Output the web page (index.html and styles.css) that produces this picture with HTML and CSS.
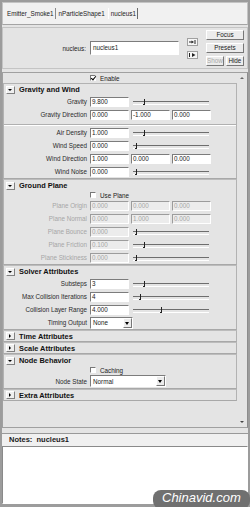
FILE: index.html
```html
<!DOCTYPE html>
<html lang="en">
<head>
  <meta charset="UTF-8">
  <meta name="viewport" content="width=device-width, initial-scale=1.0">
  <title>Attribute Editor - nucleus1</title>
  <link rel="stylesheet" href="styles.css">
</head>
<body>
  <div class="window">
    <div class="tabbar">
      <span class="tab">Emitter_Smoke1</span>
      <span class="tab">nParticleShape1</span>
      <span class="tab active">nucleus1</span>
    </div>

    <div class="node-panel">
      <span class="node-label">nucleus:</span>
      <span class="node-name">nucleus1</span>
      <div class="node-icons">
        <svg width="11" height="8" viewBox="0 0 11 8">
          <rect x="0.5" y="0.5" width="10" height="7" fill="#f6f6f6" stroke="#a0a0a0"/>
          <path d="M8 2 V6" stroke="#222" stroke-width="1"/>
          <path d="M2 4 H5" stroke="#222" stroke-width="1"/>
          <path d="M4.5 2.5 L7 4 L4.5 5.5 Z" fill="#222"/>
        </svg>
        <svg width="11" height="8" viewBox="0 0 11 8">
          <rect x="0.5" y="0.5" width="10" height="7" fill="#f6f6f6" stroke="#a0a0a0"/>
          <path d="M2.5 2 V6" stroke="#222" stroke-width="1"/>
          <path d="M5 2 L8.5 4 L5 6 Z" fill="#222"/>
        </svg>
      </div>
      <div class="node-buttons">
        <button class="btn">Focus</button>
        <button class="btn">Presets</button>
        <div class="btn-pair">
          <button class="btn small" disabled>Show</button>
          <button class="btn">Hide</button>
        </div>
      </div>
    </div>

    <div class="scroll-area">
      <div class="attrs">
        <div class="check-row enable"><span class="checkbox checked"></span>Enable</div>

        <div class="frame">
          <div class="frame-head"><span class="toggle open"></span>Gravity and Wind</div>
          <div class="row"><span class="lbl">Gravity</span><span class="field">9.800</span><span class="slider"><span class="thumb" style="left: 10px"></span></span></div>
          <div class="row"><span class="lbl">Gravity Direction</span><span class="field">0.000</span><span class="field">-1.000</span><span class="field">0.000</span></div>
          <div class="separator"></div>
          <div class="row"><span class="lbl">Air Density</span><span class="field">1.000</span><span class="slider"><span class="thumb" style="left: 10px"></span></span></div>
          <div class="row"><span class="lbl">Wind Speed</span><span class="field">0.000</span><span class="slider"><span class="thumb" style="left: 2px"></span></span></div>
          <div class="row"><span class="lbl">Wind Direction</span><span class="field">1.000</span><span class="field">0.000</span><span class="field">0.000</span></div>
          <div class="row"><span class="lbl">Wind Noise</span><span class="field">0.000</span><span class="slider"><span class="thumb" style="left: 2px"></span></span></div>
        </div>

        <div class="frame">
          <div class="frame-head"><span class="toggle open"></span>Ground Plane</div>
          <div class="check-row"><span class="checkbox"></span>Use Plane</div>
          <div class="row disabled"><span class="lbl">Plane Origin</span><span class="field">0.000</span><span class="field">0.000</span><span class="field">0.000</span></div>
          <div class="row disabled"><span class="lbl">Plane Normal</span><span class="field">0.000</span><span class="field">1.000</span><span class="field">0.000</span></div>
          <div class="row disabled"><span class="lbl">Plane Bounce</span><span class="field">0.000</span><span class="slider"><span class="thumb" style="left: 2px"></span></span></div>
          <div class="row disabled"><span class="lbl">Plane Friction</span><span class="field">0.100</span><span class="slider"><span class="thumb" style="left: 10px"></span></span></div>
          <div class="row disabled"><span class="lbl">Plane Stickiness</span><span class="field">0.000</span><span class="slider"><span class="thumb" style="left: 2px"></span></span></div>
        </div>

        <div class="frame">
          <div class="frame-head"><span class="toggle open"></span>Solver Attributes</div>
          <div class="row"><span class="lbl">Substeps</span><span class="field">3</span><span class="slider"><span class="thumb" style="left: 10px"></span></span></div>
          <div class="row"><span class="lbl">Max Collision Iterations</span><span class="field">4</span><span class="slider"><span class="thumb" style="left: 6px"></span></span></div>
          <div class="row"><span class="lbl">Collision Layer Range</span><span class="field">4.000</span><span class="slider"><span class="thumb" style="left: 27px"></span></span></div>
          <div class="row"><span class="lbl">Timing Output</span><span class="dropdown timing">None<span class="drop-btn"></span></span></div>
        </div>

        <div class="frame closed">
          <div class="frame-head"><span class="toggle"></span>Time Attributes</div>
        </div>
        <div class="frame closed">
          <div class="frame-head"><span class="toggle"></span>Scale Attributes</div>
        </div>

        <div class="frame">
          <div class="frame-head"><span class="toggle open"></span>Node Behavior</div>
          <div class="check-row"><span class="checkbox"></span>Caching</div>
          <div class="row tall"><span class="lbl">Node State</span><span class="dropdown state">Normal<span class="drop-btn"></span></span></div>
        </div>

        <div class="frame closed">
          <div class="frame-head"><span class="toggle"></span>Extra Attributes</div>
        </div>
      </div>
      <div class="scrollbar">
        <span class="arrow up"></span>
        <span class="arrow down"></span>
      </div>
    </div>

    <div class="notes">
      <div class="notes-label">Notes:&nbsp; nucleus1</div>
      <div class="notes-text"></div>
    </div>

    <div class="watermark">Chinavid.com</div>
  </div>
</body>
</html>
```

FILE: styles.css
```css
* {
  margin: 0;
  padding: 0;
  box-sizing: border-box;
}

body {
  width: 250px;
  height: 507px;
  overflow: hidden;
  font-family: 'Liberation Sans', Arial, sans-serif;
  font-size: 6.3px;
  color: #1a1a1a;
  background: #9c9c9c;
}

.window {
  position: relative;
  height: 507px;
  display: flex;
  flex-direction: column;
  border: 2px solid #9c9c9c;
  border-bottom-width: 3px;
  background: #e4e4e4;
}

/* Tabs */
.tabbar {
  height: 23px;
  flex-shrink: 0;
  display: flex;
  align-items: center;
  padding-left: 4px;
  background: #f1f1f1;
  border: 1px solid #c4c4c4;
  border-bottom-color: #a4a4a4;
}

.tab {
  height: 11px;
  line-height: 11px;
  padding: 0 3px;
  color: #222;
}

.tab:first-child {
  padding-left: 0;
  padding-right: 1px;
  border-right: 1px solid #8a8a8a;
}

.tab.active {
  padding: 0 1px 0 2px;
  border-left: 1px solid #fff;
  border-right: 1px solid #6a6a6a;
}

/* Node name panel */
.node-panel {
  height: 42px;
  flex-shrink: 0;
  margin-top: 2px;
  display: flex;
  align-items: center;
  border: 1px solid #c4c4c4;
}

.node-label {
  width: 87px;
  padding-right: 4px;
  text-align: right;
}

.node-name {
  width: 89px;
  height: 14px;
  line-height: 12px;
  padding-left: 2px;
  background: #fff;
  border: 1px solid #fff;
  border-top-color: #7c7c7c;
  border-left-color: #7c7c7c;
}

.node-icons {
  margin-left: 8px;
  display: flex;
  flex-direction: column;
  gap: 5px;
}

.node-icons svg {
  display: block;
}

.node-buttons {
  margin-left: 8px;
  width: 38px;
  display: flex;
  flex-direction: column;
  gap: 3px;
}

.btn-pair {
  display: flex;
  gap: 2px;
}

.btn {
  height: 10px;
  flex: 1;
  font-family: inherit;
  font-size: 6.3px;
  line-height: 8px;
  color: #1a1a1a;
  background: #ececec;
  border: 1px solid #777;
  border-top-color: #fff;
  border-left-color: #fff;
}

.btn.small {
  flex: 0 0 17px;
}

.btn:disabled {
  color: #a8a8a8;
}

/* Scrolling attribute area */
.scroll-area {
  height: 356px;
  flex-shrink: 0;
  margin-top: 3px;
  display: flex;
  border: 1px solid #a0a0a0;
  border-right-color: #8c8c8c;
}

.attrs {
  flex: 1;
}

.scrollbar {
  width: 10px;
  display: flex;
  flex-direction: column;
  justify-content: space-between;
  align-items: center;
  padding: 4px 0 4px;
}

.arrow {
  width: 0;
  height: 0;
  border-left: 2px solid transparent;
  border-right: 2px solid transparent;
}

.arrow.up {
  border-bottom: 2px solid #666;
}

.arrow.down {
  border-top: 2px solid #444;
}

.check-row {
  height: 8px;
  display: flex;
  align-items: center;
  padding-left: 86px;
}

.check-row.enable {
  height: 10px;
  padding-left: 87px;
}

.checkbox {
  position: relative;
  width: 6px;
  height: 6px;
  margin-right: 4px;
  background: #fff;
  border: 1px solid #fff;
  border-top-color: #777;
  border-left-color: #777;
}

.checkbox.checked::after {
  content: "";
  position: absolute;
  left: 1px;
  top: -1px;
  width: 2px;
  height: 4px;
  border-right: 1px solid #000;
  border-bottom: 1px solid #000;
  transform: rotate(40deg);
}

/* Frames */
.frame {
  border: 1px solid #b2b2b2;
  border-bottom-color: #a8a8a8;
}

.frame + .frame {
  border-top-color: #bcbcbc;
}

.frame-head {
  height: 11px;
  display: flex;
  align-items: center;
  padding-left: 2px;
  font-size: 7.4px;
  font-weight: bold;
  color: #111;
}

.frame.closed .frame-head {
  height: 10px;
}

.toggle {
  position: relative;
  width: 9px;
  height: 8px;
  margin-right: 4px;
  background: #efefef;
  border: 1px solid #808080;
  border-top-color: #fff;
  border-left-color: #fff;
}

.toggle::after {
  content: "";
  position: absolute;
  left: 2px;
  top: 1px;
  border-top: 2px solid transparent;
  border-bottom: 2px solid transparent;
  border-left: 2px solid #000;
}

.toggle.open::after {
  left: 1px;
  top: 2px;
  border-left: 2px solid transparent;
  border-right: 2px solid transparent;
  border-top: 2px solid #000;
  border-bottom: 0;
}

.row {
  height: 13px;
  display: flex;
  align-items: center;
  gap: 2px;
}

.row.tall {
  height: 14px;
}

.lbl {
  width: 83px;
  margin-right: 1px;
  text-align: right;
  white-space: nowrap;
  color: #2a2a2a;
}

.field {
  width: 39px;
  height: 10px;
  line-height: 8px;
  padding-left: 1px;
  background: #fff;
  border: 1px solid #fff;
  border-top-color: #7c7c7c;
  border-left-color: #7c7c7c;
}

.row.disabled .lbl,
.row.disabled .field {
  color: #a6a6a6;
}

.row.disabled .field {
  background: #ececec;
  border-top-color: #9c9c9c;
  border-left-color: #9c9c9c;
}

.separator {
  height: 5px;
  border-bottom: 1px solid #fff;
  box-shadow: inset 0 -2px 0 -1px #b0b0b0;
}

.slider {
  position: relative;
  width: 76px;
  height: 10px;
  margin-left: 2px;
}

.slider::before {
  content: "";
  position: absolute;
  left: 0;
  right: 0;
  top: 4px;
  height: 2px;
  border-top: 1px solid #6e6e6e;
  border-bottom: 1px solid #fff;
}

.thumb {
  position: absolute;
  top: 2px;
  width: 2px;
  height: 6px;
  border-right: 1px solid #222;
  border-bottom: 1px solid #222;
}

.dropdown {
  height: 12px;
  display: flex;
  align-items: center;
  justify-content: space-between;
  padding-left: 2px;
  background: #fff;
  border: 1px solid #fff;
  border-top-color: #7c7c7c;
  border-left-color: #7c7c7c;
}

.dropdown.timing {
  width: 43px;
}

.dropdown.state {
  width: 76px;
}

.drop-btn {
  position: relative;
  width: 9px;
  height: 10px;
  background: #ececec;
  border: 1px solid #777;
  border-top-color: #fff;
  border-left-color: #fff;
}

.drop-btn::after {
  content: "";
  position: absolute;
  left: 1px;
  top: 3px;
  border-left: 2.5px solid transparent;
  border-right: 2.5px solid transparent;
  border-top: 3px solid #000;
}

/* Notes */
.notes {
  flex: 1;
  display: flex;
  flex-direction: column;
  padding-top: 5px;
}

.notes-label {
  height: 13px;
  line-height: 12px;
  padding-left: 7px;
  font-size: 7.5px;
  font-weight: bold;
  background: #f0f0f0;
  border-top: 1px solid #999;
}

.notes-text {
  flex: 1;
  background: #fff;
  border: 1px solid #fff;
  border-top-color: #8a8a8a;
  border-left-color: #8a8a8a;
}

.watermark {
  position: absolute;
  right: -2px;
  bottom: -5px;
  width: 97px;
  height: 19px;
  padding-left: 9px;
  line-height: 16px;
  font-size: 13px;
  font-style: italic;
  color: #fff;
  background: #707070;
  border-radius: 8px;
}
```
